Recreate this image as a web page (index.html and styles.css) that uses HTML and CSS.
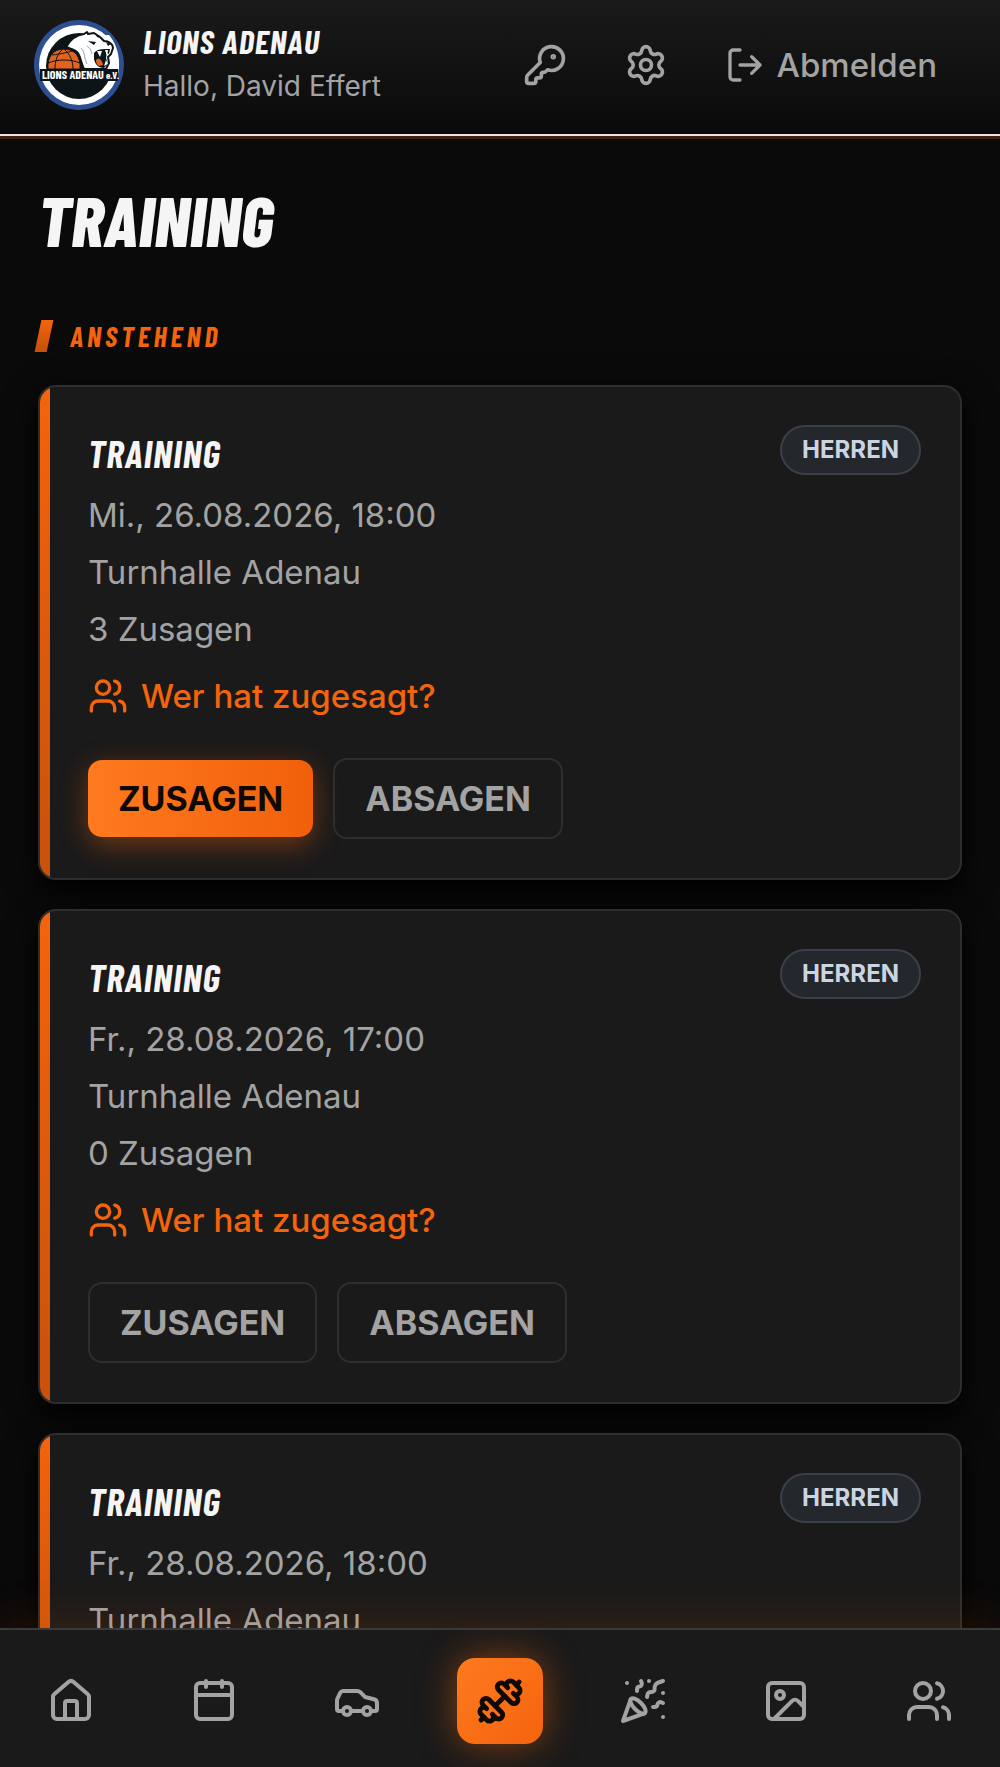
FILE: index.html
```html
<!DOCTYPE html>
<html lang="de">
<head>
<meta charset="utf-8">
<meta name="viewport" content="width=device-width, initial-scale=1">
<title>Lions Adenau – Training</title>
<link rel="stylesheet" href="styles.css">
</head>
<body>
<svg class="sprite" aria-hidden="true">
  <symbol id="i-users" viewBox="0 0 24 24"><path d="M16 21v-2a4 4 0 0 0-4-4H6a4 4 0 0 0-4 4v2"/><circle cx="9" cy="7" r="4"/><path d="M22 21v-2a4 4 0 0 0-3-3.87M16 3.13a4 4 0 0 1 0 7.75"/></symbol>
</svg>

<header class="topbar">
  <svg class="logo" viewBox="0 0 90 90" role="img" aria-label="Lions Adenau e.V.">
    <circle cx="45" cy="45" r="45" fill="#2c4f92"/>
    <circle cx="45" cy="45" r="40" fill="#fff"/>
    <circle cx="45" cy="46" r="33" fill="#0c1418"/>
    <path d="M60 15h15c6 7 10 16 10 30v4H60z" fill="#fff"/>
    <path d="M32 27c4-7 9-12 18-13l3-2 1 2 6-1 6 4 4 4c5 0 9 3 9 7l-2 6-3 3 1 6-3 6H50c-3-6-3-11-6-16-3-4-7-4-12-6z" fill="#fff" stroke="#0c1418" stroke-width="2" stroke-linejoin="round"/>
    <path d="M60 33c3-4 8-4 16-4l-1 5-2-1-1 5 2 6-4 4c-6 0-9-4-10-9z" fill="#0c1418"/>
    <path d="M62 40c3-3 6 0 7 5l-4 1c-2-1-3-3-3-6z" fill="#e06420"/>
    <path d="m63 31 3 6 2-6zM71 30l2 6 1-6zM70 46l2-6 2 4z" fill="#fff"/>
    <path d="m54 21 8 1-2 3zM72 22l5 2-3 2zM61 13l2 4 3 1z" fill="#0c1418"/>
    <path d="M47 28c4 4 3 10 6 16M53 26c3 2 4 4 5 8" fill="none" stroke="#9aa0a4" stroke-width="1"/>
    <path d="M14 49c-1-12 5-20 16-20s17 8 16 20z" fill="#e06420" stroke="#0c1418" stroke-width="1"/>
    <path d="M14 43c10-4 22-4 32 0M18 35c9-1 17-3 20-4M29 29c-6 5-8 12-8 20M30 29c6 5 9 12 9 20" fill="none" stroke="#0c1418" stroke-width="1"/>
    <path d="M6 49h78v12H6z" fill="#0c1418"/>
    <text x="8" y="59" class="logo-text" fill="#fff">LIONS ADENAU</text>
    <text x="72" y="59" class="logo-text logo-small" fill="#fff">e.V.</text>
  </svg>
  <div class="identity">
    <span class="club">Lions Adenau</span>
    <span class="greeting">Hallo, David Effert</span>
  </div>
  <div class="actions">
    <button class="icon-button" type="button" aria-label="Passwort ändern">
      <svg class="icon" viewBox="0 0 24 24"><path d="M2.586 17.414A2 2 0 0 0 2 18.828V21a1 1 0 0 0 1 1h3a1 1 0 0 0 1-1v-1a1 1 0 0 1 1-1h1a1 1 0 0 0 1-1v-1a1 1 0 0 1 1-1h.172a2 2 0 0 0 1.414-.586l.814-.814a6.5 6.5 0 1 0-4-4z"/><circle cx="16.5" cy="7.5" r=".5" fill="currentColor"/></svg>
    </button>
    <button class="icon-button" type="button" aria-label="Einstellungen">
      <svg class="icon" viewBox="0 0 24 24"><path d="M9.671 4.136a2.34 2.34 0 0 1 4.659 0 2.34 2.34 0 0 0 3.319 1.915 2.34 2.34 0 0 1 2.33 4.033 2.34 2.34 0 0 0 0 3.831 2.34 2.34 0 0 1-2.33 4.033 2.34 2.34 0 0 0-3.319 1.915 2.34 2.34 0 0 1-4.659 0 2.34 2.34 0 0 0-3.32-1.915 2.34 2.34 0 0 1-2.33-4.033 2.34 2.34 0 0 0 0-3.831A2.34 2.34 0 0 1 6.35 6.051a2.34 2.34 0 0 0 3.319-1.915"/><circle cx="12" cy="12" r="3"/></svg>
    </button>
    <button class="logout" type="button">
      <svg class="icon icon-small" viewBox="0 0 24 24"><path d="m16 17 5-5-5-5M21 12H9M9 21H5a2 2 0 0 1-2-2V5a2 2 0 0 1 2-2h4"/></svg>
      Abmelden
    </button>
  </div>
</header>

<main class="content">
  <h1 class="page-title">Training</h1>
  <h2 class="section-title">Anstehend</h2>
  <div class="cards">
    <article class="card">
      <div class="card-head">
        <h3 class="card-title">Training</h3>
        <span class="badge">HERREN</span>
      </div>
      <p class="line">Mi., 26.08.2026, 18:00</p>
      <p class="line">Turnhalle Adenau</p>
      <p class="line">3 Zusagen</p>
      <button class="who" type="button"><svg class="icon icon-small"><use href="#i-users"/></svg>Wer hat zugesagt?</button>
      <div class="replies">
        <button class="reply reply-active" type="button" aria-pressed="true">ZUSAGEN</button>
        <button class="reply" type="button">ABSAGEN</button>
      </div>
    </article>
    <article class="card">
      <div class="card-head">
        <h3 class="card-title">Training</h3>
        <span class="badge">HERREN</span>
      </div>
      <p class="line">Fr., 28.08.2026, 17:00</p>
      <p class="line">Turnhalle Adenau</p>
      <p class="line">0 Zusagen</p>
      <button class="who" type="button"><svg class="icon icon-small"><use href="#i-users"/></svg>Wer hat zugesagt?</button>
      <div class="replies">
        <button class="reply" type="button">ZUSAGEN</button>
        <button class="reply" type="button">ABSAGEN</button>
      </div>
    </article>
    <article class="card">
      <div class="card-head">
        <h3 class="card-title">Training</h3>
        <span class="badge">HERREN</span>
      </div>
      <p class="line">Fr., 28.08.2026, 18:00</p>
      <p class="line">Turnhalle Adenau</p>
    </article>
  </div>
</main>

<nav class="tabbar" aria-label="Hauptnavigation">
  <a class="tab" href="#start" aria-label="Start"><svg class="icon" viewBox="0 0 24 24"><path d="M15 21v-8a1 1 0 0 0-1-1h-4a1 1 0 0 0-1 1v8"/><path d="M3 10a2 2 0 0 1 .709-1.528l7-5.999a2 2 0 0 1 2.582 0l7 5.999A2 2 0 0 1 21 10v9a2 2 0 0 1-2 2H5a2 2 0 0 1-2-2z"/></svg></a>
  <a class="tab" href="#termine" aria-label="Termine"><svg class="icon" viewBox="0 0 24 24"><rect x="3" y="3" width="18" height="18" rx="2"/><path d="M8 2v3M16 2v3M3 9h18"/></svg></a>
  <a class="tab" href="#fahrten" aria-label="Fahrten"><svg class="icon" viewBox="0 0 24 24"><path d="M19 17h2c.6 0 1-.4 1-1v-3c0-.9-.7-1.7-1.5-1.9C18.7 10.6 16 10 16 10s-1.3-1.4-2.2-2.3c-.5-.4-1.1-.7-1.8-.7H5c-.6 0-1.1.4-1.4.9l-1.4 2.9A3.7 3.7 0 0 0 2 12v4c0 .6.4 1 1 1h2"/><circle cx="7" cy="17" r="2"/><path d="M9 17h6"/><circle cx="17" cy="17" r="2"/></svg></a>
  <a class="tab tab-active" href="#training" aria-label="Training" aria-current="page"><svg class="icon" viewBox="0 0 24 24"><path d="M17.596 12.768a2 2 0 1 0 2.829-2.829l-1.768-1.767a2 2 0 0 0 2.828-2.829l-2.828-2.828a2 2 0 0 0-2.829 2.828l-1.767-1.768a2 2 0 1 0-2.829 2.829z"/><path d="m2.5 21.5 1.4-1.4M20.1 3.9l1.4-1.4"/><path d="M5.343 21.485a2 2 0 1 0 2.829-2.828l1.767 1.768a2 2 0 1 0 2.829-2.829l-6.364-6.364a2 2 0 1 0-2.829 2.829l1.768 1.767a2 2 0 0 0-2.828 2.829z"/><path d="m9.6 14.4 4.8-4.8"/></svg></a>
  <a class="tab" href="#events" aria-label="Events"><svg class="icon" viewBox="0 0 24 24"><path d="M5.8 11.3 2 22l10.7-3.79M4 3h.01M22 8h.01M15 2h.01M22 20h.01"/><path d="m22 2-2.24.75a2.9 2.9 0 0 0-1.96 3.12c.1.86-.57 1.63-1.45 1.63h-.38c-.86 0-1.6.6-1.76 1.44L14 10"/><path d="m22 13-.82-.33c-.86-.34-1.82.2-1.98 1.11c-.11.7-.72 1.22-1.43 1.22H17"/><path d="m11 2 .33.82c.34.86-.2 1.82-1.11 1.98C9.52 4.9 9 5.52 9 6.23V7"/><path d="M11 13c1.93 1.93 2.83 4.17 2 5-.83.83-3.07-.07-5-2-1.93-1.93-2.83-4.17-2-5 .83-.83 3.07.07 5 2Z"/></svg></a>
  <a class="tab" href="#galerie" aria-label="Galerie"><svg class="icon" viewBox="0 0 24 24"><rect x="3" y="3" width="18" height="18" rx="2"/><circle cx="9" cy="9" r="2"/><path d="m21 15-3.086-3.086a2 2 0 0 0-2.828 0L6 21"/></svg></a>
  <a class="tab" href="#team" aria-label="Team"><svg class="icon"><use href="#i-users"/></svg></a>
</nav>
</body>
</html>
```
FILE: styles.css
```css
:root {
  --bg: #0a0a0a;
  --surface: #1a1a1a;
  --line: #2e2e2e;
  --text: #f5f5f5;
  --muted: #a3a3a3;
  --orange: #f4640c;
  --orange-light: #ff7a1f;
  --display: "Barlow Condensed", "Roboto Condensed", "Liberation Sans Narrow", "Liberation Sans", sans-serif;
}

* {
  box-sizing: border-box;
}

body {
  margin: 0;
  height: 100vh;
  display: flex;
  flex-direction: column;
  overflow: hidden;
  background: var(--bg);
  color: var(--text);
  font-family: Inter, "Liberation Sans", sans-serif;
}

h1,
h2,
h3,
p {
  margin: 0;
}

button {
  padding: 0;
  border: 0;
  background: none;
  color: inherit;
  font: inherit;
  cursor: pointer;
}

.sprite {
  display: none;
}

.icon {
  width: 44px;
  height: 44px;
  flex: none;
  fill: none;
  stroke: currentColor;
  stroke-width: 2;
  stroke-linecap: round;
  stroke-linejoin: round;
}

.icon-small {
  width: 40px;
  height: 40px;
}

/* Header */
.topbar {
  flex: none;
  display: flex;
  align-items: center;
  gap: 19px;
  padding: 20px 63px 24px 34px;
  background: linear-gradient(#1a1a1a, var(--bg));
  border-bottom: 2px solid #e8e6e4;
  box-shadow: 0 3px 0 #43210f;
  position: relative;
}

.logo {
  width: 90px;
  height: 90px;
  flex: none;
}

.logo-text {
  font: 700 12px var(--display);
}

.logo-small {
  font-size: 10px;
}

.identity {
  display: flex;
  flex-direction: column;
  flex: 1;
}

.club {
  font: italic 700 33px/42px var(--display);
  letter-spacing: 1px;
  text-transform: uppercase;
}

.greeting {
  font-size: 28px;
  line-height: 48px;
  color: var(--muted);
}

.actions {
  display: flex;
  align-items: center;
  gap: 57px;
  color: var(--muted);
}

.icon-button,
.logout {
  display: flex;
  align-items: center;
}

.logout {
  gap: 12px;
  font-size: 33px;
  font-weight: 500;
}

/* Page */
.content {
  flex: 1;
  min-height: 0;
  overflow: hidden;
  padding: 43px 38px 0;
}

.page-title {
  font: italic 800 70px/80px var(--display);
  text-transform: uppercase;
}

.section-title {
  display: flex;
  align-items: center;
  gap: 20px;
  margin: 61px 0 33px;
  font: italic 700 28px/32px var(--display);
  letter-spacing: 4px;
  text-transform: uppercase;
  color: var(--orange);
}

.section-title::before {
  content: "";
  width: 12px;
  height: 32px;
  background: linear-gradient(var(--orange), #c4500c);
  transform: skewX(-12deg);
}

.cards {
  display: flex;
  flex-direction: column;
  gap: 29px;
}

.card {
  display: flex;
  flex-direction: column;
  align-items: flex-start;
  padding: 38px 39px 39px 48px;
  border: 2px solid var(--line);
  border-radius: 18px;
  background: linear-gradient(var(--orange), #c8510c) left / 10px 100% no-repeat var(--surface);
  box-shadow: 0 8px 32px #000000;
}

.card-head {
  align-self: stretch;
  display: flex;
  justify-content: space-between;
  align-items: flex-start;
  height: 66px;
}

.card-title {
  font: italic 700 38px/56px var(--display);
  letter-spacing: 1px;
  text-transform: uppercase;
}

.badge {
  padding: 0 20px;
  border: 2px solid #3a3f49;
  border-radius: 25px;
  background: #24272c;
  color: #cbd5e1;
  font-size: 24px;
  font-weight: 700;
  line-height: 46px;
}

.line {
  font-size: 33px;
  line-height: 48px;
  margin-bottom: 9px;
  color: var(--muted);
}

.who {
  display: flex;
  align-items: center;
  gap: 13px;
  margin-top: 10px;
  font-size: 33px;
  font-weight: 500;
  line-height: 48px;
  color: var(--orange);
}

.replies {
  display: flex;
  align-items: center;
  gap: 20px;
  margin-top: 38px;
}

.reply {
  padding: 0 30px;
  border: 2px solid var(--line);
  border-radius: 14px;
  color: var(--muted);
  font-size: 34px;
  font-weight: 700;
  line-height: 77px;
}

.reply-active {
  border: 0;
  background: linear-gradient(90deg, var(--orange-light), #f0600a);
  box-shadow: 0 8px 28px rgba(244, 100, 12, 0.4);
  color: #0f0805;
}

/* Bottom navigation */
.tabbar {
  flex: none;
  position: relative;
  display: grid;
  grid-template-columns: repeat(7, 1fr);
  align-items: center;
  justify-items: center;
  padding: 28px 0 23px;
  background: var(--surface);
  border-top: 2px solid #3a3a3a;
  box-shadow: 0 -8px 44px rgba(244, 100, 12, 0.12);
}

.tab {
  display: grid;
  place-items: center;
  width: 86px;
  height: 86px;
  border-radius: 18px;
  color: var(--muted);
}

.tab .icon {
  width: 48px;
  height: 48px;
}

.tab-active {
  background: linear-gradient(135deg, #ff7a1f, #f4640c);
  box-shadow: 0 0 36px rgba(244, 100, 12, 0.5);
  color: #0f0805;
}

.tab-active .icon {
  stroke-width: 2.4;
}
```
